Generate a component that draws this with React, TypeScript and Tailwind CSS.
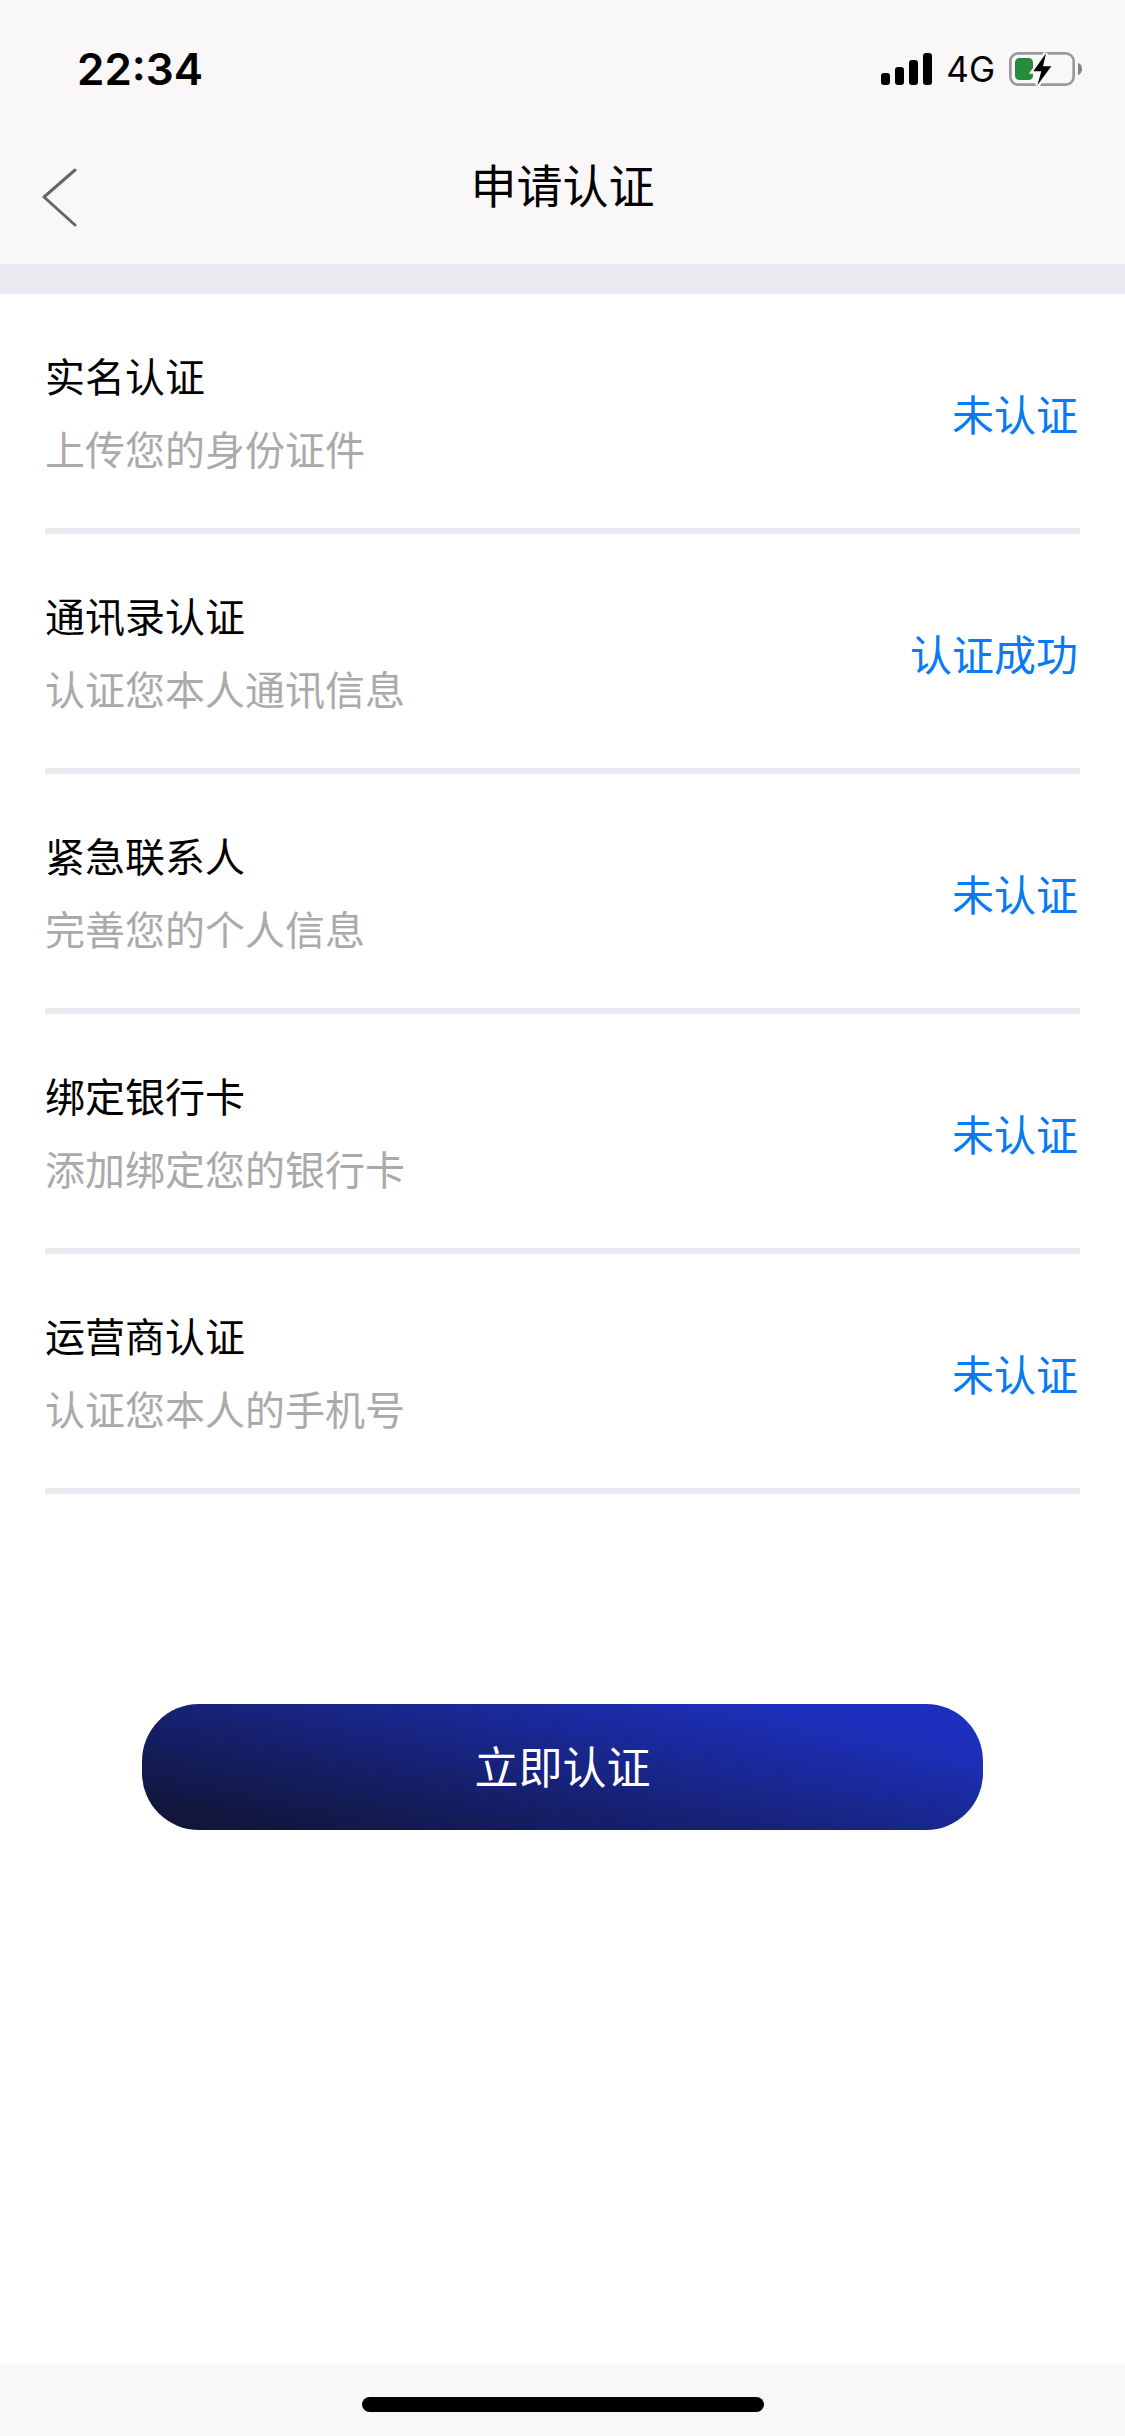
import React from "react";

const items = [
  { title: "实名认证", desc: "上传您的身份证件", status: "未认证" },
  { title: "通讯录认证", desc: "认证您本人通讯信息", status: "认证成功" },
  { title: "紧急联系人", desc: "完善您的个人信息", status: "未认证" },
  { title: "绑定银行卡", desc: "添加绑定您的银行卡", status: "未认证" },
  { title: "运营商认证", desc: "认证您本人的手机号", status: "未认证" },
];

function SignalIcon() {
  return (
    <svg className="w-[51px] h-8" viewBox="0 0 153 96" fill="#000">
      <rect x="0" y="60" width="27" height="36" rx="9" />
      <rect x="42" y="42" width="27" height="54" rx="9" />
      <rect x="84" y="21" width="27" height="75" rx="9" />
      <rect x="126" y="0" width="27" height="96" rx="9" />
    </svg>
  );
}

function BatteryIcon() {
  return (
    <svg className="w-[73px] h-[34px]" viewBox="0 0 219 102">
      <rect x="4" y="4" width="190" height="94" rx="24" fill="none" stroke="#9b999b" strokeWidth="8" />
      <path d="M207 33c8 2 12 9 12 18s-4 16-12 18z" fill="#858385" />
      <rect x="18" y="18" width="54" height="66" rx="13" fill="#278b3d" />
      {/* bolt with its cut-out */}
      <path
        d="M111 4 L73 58 H97 L85 100 L127 43 H102 Z"
        fill="#f9f7f8"
        stroke="#f9f7f8"
        strokeWidth="14"
      />
      <path d="M111 4 L73 58 H97 L85 100 L127 43 H102 Z" fill="#000" />
    </svg>
  );
}

export default function App() {
  return (
    <div className="min-h-screen flex flex-col bg-white text-black font-['Noto_Sans_CJK_SC',sans-serif]">

      {/* Status bar */}
      <div className="flex items-center justify-between h-[138px] pl-[77px] pr-[43px] bg-[#f9f7f8] font-['Inter',sans-serif]">
        <span className="text-[44px] leading-[56px] font-semibold">22:34</span>
        <div className="flex items-center gap-[14px]">
          <SignalIcon />
          <span className="text-[35px] leading-[48px]">4G</span>
          <BatteryIcon />
        </div>
      </div>

      {/* Header */}
      <header className="grid grid-cols-[96px_1fr_96px] h-[126px] bg-[#f9f7f8]">
        <button type="button" aria-label="返回" className="flex items-center justify-center h-[118px] pl-6">
          <svg className="w-9 h-[60px]" viewBox="0 0 36 60" fill="none" stroke="#666" strokeWidth="3" strokeLinecap="round" strokeLinejoin="round">
            <path d="M33 3 L2 30 L33 58" />
          </svg>
        </button>
        <h1 className="text-[46px] leading-[90px] text-center">申请认证</h1>
      </header>
      <div className="h-[30px] bg-[#ebeaf0]" />

      {/* List */}
      <main className="flex-1">
        <ul className="px-[45px]">
          {items.map((item) => (
            <li key={item.title} className="flex items-center justify-between h-60 pt-[2px] pr-[2px] border-b-[6px] border-[#ebeaf0]">
              <div className="text-[40px] leading-[73px]">
                <h2>{item.title}</h2>
                <p className="text-[#aaa]">{item.desc}</p>
              </div>
              <span className="text-[42px] leading-[73px] text-[#077af5]">{item.status}</span>
            </li>
          ))}
        </ul>

        <div className="px-[142px] pt-[210px]">
          <button
            type="button"
            className="w-full h-[126px] pb-1 rounded-[57px] bg-linear-[12deg] from-[#11163a] from-8% to-[#1d30bd] to-85% text-white text-[44px]"
          >
            立即认证
          </button>
        </div>
      </main>

      {/* Home indicator */}
      <footer className="flex justify-center h-[72px] pt-[33px] bg-[#f9f7f8]">
        <div className="w-[402px] h-[15px] rounded-full bg-black" />
      </footer>
    </div>
  );
}
